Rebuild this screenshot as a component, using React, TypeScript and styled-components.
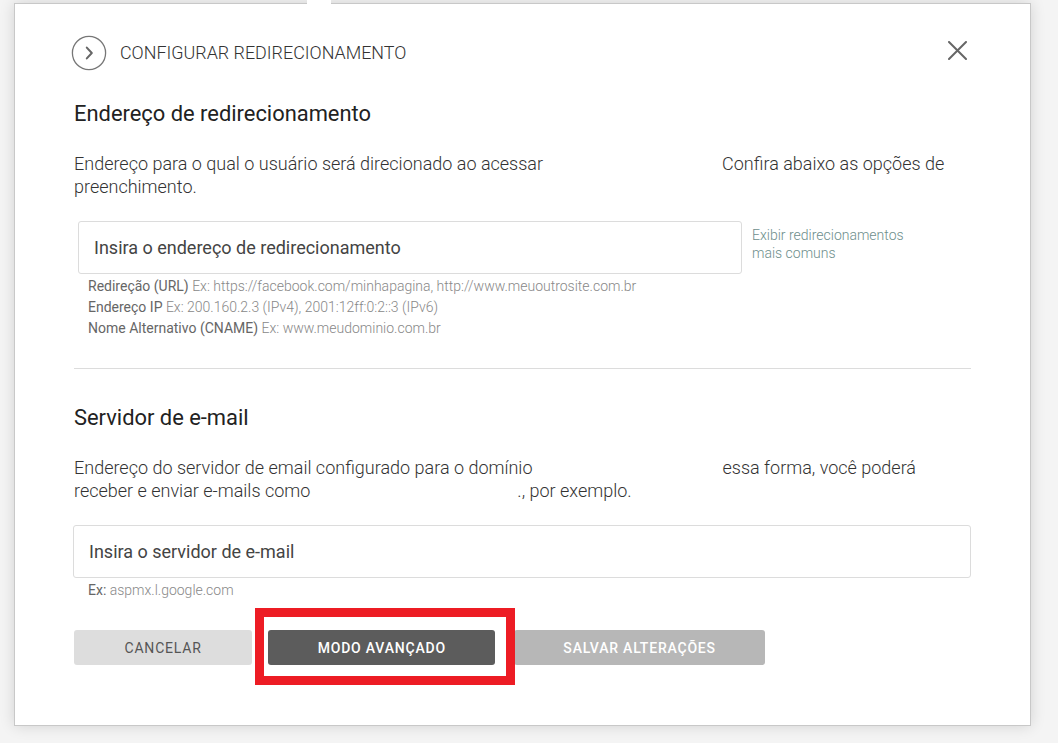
import React from "react";
import styled, { createGlobalStyle } from "styled-components";

const GlobalStyle = createGlobalStyle`
  * { box-sizing: border-box; }
  html, body { margin: 0; padding: 0; }
  body {
    background: #f4f4f4;
    font-family: Roboto, "Liberation Sans", Arial, sans-serif;
    color: #444;
  }
`;

const hints = [
  { label: "Redireção (URL)", example: "Ex: https://facebook.com/minhapagina, http://www.meuoutrosite.com.br" },
  { label: "Endereço IP", example: "Ex: 200.160.2.3 (IPv4), 2001:12ff:0:2::3 (IPv6)" },
  { label: "Nome Alternativo (CNAME)", example: "Ex: www.meudominio.com.br" },
];

const App: React.FC = () => {
  return (
    <>
      <GlobalStyle />
      <Page>
        <TopNotch />
        <Modal>
          <Header>
            <HeaderLeft>
              <CircleIcon width="36" height="36" viewBox="0 0 36 36">
                <circle cx="18" cy="18" r="16.6" fill="none" stroke="#777" strokeWidth="1.3" />
                <path d="M15.8 12.6 L20.8 18 L15.8 23.4" fill="none" stroke="#666" strokeWidth="2" strokeLinecap="round" strokeLinejoin="round" />
              </CircleIcon>
              <HeaderTitle>CONFIGURAR REDIRECIONAMENTO</HeaderTitle>
            </HeaderLeft>
            <CloseButton aria-label="Fechar">
              <svg width="19" height="19" viewBox="0 0 19 19">
                <path d="M1 1 L18 18 M18 1 L1 18" stroke="#666" strokeWidth="2" strokeLinecap="round" />
              </svg>
            </CloseButton>
          </Header>

          <SectionTitle $top={31}>Endereço de redirecionamento</SectionTitle>
          <Description $top={26}>
            Endereço para o qual o usuário será direcionado ao acessar
            <Redacted $w={179} />
            Confira abaixo as opções de
            <br />
            preenchimento.
          </Description>

          <InputRow>
            <Field $indent={4} $width={664}>
              <Placeholder>Insira o endereço de redirecionamento</Placeholder>
            </Field>
            <SideLink>
              Exibir redirecionamentos
              <br />
              mais comuns
            </SideLink>
          </InputRow>

          <HintList>
            {hints.map((h) => (
              <HintLine key={h.label}>
                <HintLabel>{h.label}</HintLabel> {h.example}
              </HintLine>
            ))}
          </HintList>

          <Divider />

          <SectionTitle $top={37}>Servidor de e-mail</SectionTitle>
          <Description $top={26}>
            Endereço do servidor de email configurado para o domínio
            <Redacted $w={190} />
            essa forma, você poderá
            <br />
            receber e enviar e-mails como
            <Redacted $w={207} />
            ., por exemplo.
          </Description>

          <InputRow>
            <Field $indent={-1} $width={898}>
              <Placeholder>Insira o servidor de e-mail</Placeholder>
            </Field>
          </InputRow>
          <HintList>
            <HintLine>
              <HintLabel>Ex:</HintLabel> aspmx.l.google.com
            </HintLine>
          </HintList>

          <Actions>
            <Button $variant="light">CANCELAR</Button>
            <Highlighted>
              <Button $variant="dark">MODO AVANÇADO</Button>
              <RedFrame />
            </Highlighted>
            <Button $variant="disabled">SALVAR ALTERAÇÕES</Button>
          </Actions>
        </Modal>
      </Page>
    </>
  );
};

export default App;

// --- Styled Components ---
const Page = styled.div`
  position: relative;
  width: 1058px;
  height: 743px;
  padding: 3px 0 0 14px;
  overflow: hidden;
  background: #f4f4f4;
`;

const TopNotch = styled.div`
  position: absolute;
  top: 0;
  left: 307px;
  width: 24px;
  height: 5px;
  background: #fff;
  z-index: 2;
`;

const Modal = styled.div`
  width: 1017px;
  height: 723px;
  background: #fff;
  border: 1px solid #c8c8c8;
  box-shadow: 0 0 14px rgba(0, 0, 0, 0.14);
  padding: 31px 59px 0 59px;
`;

const Header = styled.div`
  display: flex;
  align-items: center;
  justify-content: space-between;
  height: 36px;
`;

const HeaderLeft = styled.div`
  display: flex;
  align-items: center;
  margin-left: -3px;
`;

const CircleIcon = styled.svg`
  display: block;
`;

const HeaderTitle = styled.span`
  margin-left: 13px;
  margin-top: -2px;
  font-size: 17.9px;
  font-weight: 300;
  color: #333;
`;

const CloseButton = styled.button`
  display: flex;
  border: none;
  background: none;
  padding: 0;
  margin-right: 4px;
  margin-top: -5px;
  cursor: pointer;
`;

const SectionTitle = styled.h2<{ $top: number }>`
  margin: ${(p) => p.$top}px 0 0;
  font-size: 21.9px;
  line-height: 24px;
  font-weight: 400;
  color: #222;
`;

const Description = styled.p<{ $top: number }>`
  margin: ${(p) => p.$top}px 0 0;
  font-size: 18px;
  line-height: 23px;
  font-weight: 300;
  color: #333;
`;

const Redacted = styled.span<{ $w: number }>`
  display: inline-block;
  width: ${(p) => p.$w}px;
`;

const InputRow = styled.div`
  display: flex;
  align-items: flex-start;
  margin-top: 23px;
`;

const Field = styled.div<{ $indent: number; $width: number }>`
  display: flex;
  align-items: center;
  width: ${(p) => p.$width}px;
  height: 53px;
  margin-left: ${(p) => p.$indent}px;
  padding: 0 15px;
  border: 1px solid #dcdcdc;
  border-radius: 3px;
  background: #fff;
`;

const Placeholder = styled.span`
  font-size: 18px;
  font-weight: 400;
  color: #444;
  margin-top: -1px;
`;

const SideLink = styled.a`
  margin: 5px 0 0 10px;
  font-size: 14px;
  line-height: 18px;
  font-weight: 300;
  color: #6e8e8c;
  cursor: pointer;
`;

const HintList = styled.div`
  margin: 2px 0 0 14px;
  display: flex;
  flex-direction: column;
`;

const HintLine = styled.div`
  font-size: 14px;
  line-height: 21px;
  font-weight: 300;
  color: #888;
`;

const HintLabel = styled.span`
  font-weight: 400;
  color: #666;
`;

const Divider = styled.hr`
  margin: 29px 0 0;
  border: none;
  border-top: 1px solid #dcdcdc;
`;

const Actions = styled.div`
  display: flex;
  align-items: center;
  margin-top: 29px;
`;

const Highlighted = styled.div`
  position: relative;
  margin: 0 19px 0 16px;
`;

const RedFrame = styled.div`
  position: absolute;
  top: -22px;
  left: -13px;
  right: -20px;
  bottom: -20px;
  border: 9px solid #ed1c24;
  pointer-events: none;
`;

const buttonColors = {
  light: { bg: "#dddddd", fg: "#555", weight: 400, pad: 50.5 },
  dark: { bg: "#5c5c5c", fg: "#fff", weight: 500, pad: 49.5 },
  disabled: { bg: "#b7b7b7", fg: "#fff", weight: 500, pad: 49 },
};

const Button = styled.button<{ $variant: keyof typeof buttonColors }>`
  height: 35px;
  padding: 0 ${(p) => buttonColors[p.$variant].pad}px;
  border: none;
  border-radius: 3px;
  background: ${(p) => buttonColors[p.$variant].bg};
  color: ${(p) => buttonColors[p.$variant].fg};
  font-family: Roboto, "Liberation Sans", Arial, sans-serif;
  font-size: 14px;
  font-weight: ${(p) => buttonColors[p.$variant].weight};
  letter-spacing: 0.8px;
  cursor: pointer;
`;
